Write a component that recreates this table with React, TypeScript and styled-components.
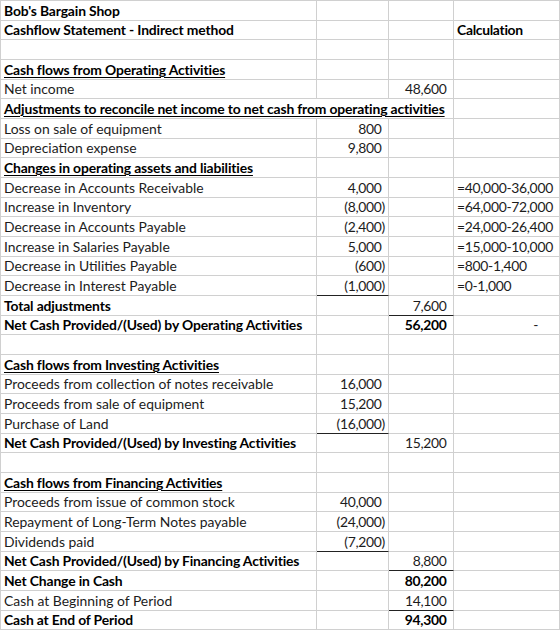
import React from "react"
import styled, { createGlobalStyle } from "styled-components"

const GRID = "#d0d0d0"
const RULE = "#222"
const PITCH = 19.67

const GlobalStyle = createGlobalStyle`
  html, body {
    margin: 0;
    padding: 0;
    background: #fff;
  }
`

type Kind = "plain" | "bold" | "head"

interface IRow {
  label?: string
  kind?: Kind
  span?: boolean
  b?: string
  c?: string
  cBold?: boolean
  d?: string
  dBold?: boolean
  dash?: boolean
  ruleB?: boolean
  ruleC?: boolean
}

const rows: IRow[] = [
  { label: "Bob's Bargain Shop", kind: "bold" },
  { label: "Cashflow Statement - Indirect method", kind: "bold", d: "Calculation", dBold: true },
  {},
  { label: "Cash flows from Operating Activities", kind: "head" },
  { label: "Net income", c: "48,600" },
  { label: "Adjustments to reconcile net income to net cash from operating activities", kind: "head", span: true },
  { label: "Loss on sale of equipment", b: "800" },
  { label: "Depreciation expense", b: "9,800" },
  { label: "Changes in operating assets and liabilities", kind: "head" },
  { label: "Decrease in Accounts Receivable", b: "4,000", d: "=40,000-36,000" },
  { label: "Increase in Inventory", b: "(8,000)", d: "=64,000-72,000" },
  { label: "Decrease in Accounts Payable", b: "(2,400)", d: "=24,000-26,400" },
  { label: "Increase in Salaries Payable", b: "5,000", d: "=15,000-10,000" },
  { label: "Decrease in Utilities Payable", b: "(600)", d: "=800-1,400" },
  { label: "Decrease in Interest Payable", b: "(1,000)", d: "=0-1,000", ruleB: true },
  { label: "Total adjustments", kind: "bold", c: "7,600", ruleC: true },
  { label: "Net Cash Provided/(Used) by Operating Activities", kind: "bold", c: "56,200", cBold: true, dash: true },
  {},
  { label: "Cash flows from Investing Activities", kind: "head" },
  { label: "Proceeds from collection of notes receivable", b: "16,000" },
  { label: "Proceeds from sale of equipment", b: "15,200" },
  { label: "Purchase of Land", b: "(16,000)", ruleB: true },
  { label: "Net Cash Provided/(Used) by Investing Activities", kind: "bold", c: "15,200" },
  {},
  { label: "Cash flows from Financing Activities", kind: "head" },
  { label: "Proceeds from issue of common stock", b: "40,000" },
  { label: "Repayment of Long-Term Notes payable", b: "(24,000)" },
  { label: "Dividends paid", b: "(7,200)", ruleB: true },
  { label: "Net Cash Provided/(Used) by Financing Activities", kind: "bold", c: "8,800", ruleC: true },
  { label: "Net Change in Cash", kind: "bold", c: "80,200", cBold: true },
  { label: "Cash at Beginning of Period", c: "14,100", ruleC: true },
  { label: "Cash at End of Period", kind: "bold", c: "94,300", cBold: true },
]

const Sheet = styled.div`
  display: flex;
  flex-direction: column;
  width: max-content;
  border-top: 1px solid ${GRID};
  border-left: 1px solid ${GRID};
  font-family: Lato, "Open Sans", "DejaVu Sans", sans-serif;
  font-size: 13.9px;
  color: #1c1c1c;
`

const Row = styled.div<{ $h: number }>`
  display: grid;
  grid-template-columns: 316px 72px 65px 106px;
  height: ${(p) => p.$h}px;
`

const Cell = styled.div<{ $align?: "left" | "right"; $bold?: boolean; $rule?: boolean; $span?: number; $padRight?: number; $num?: boolean }>`
  box-sizing: border-box;
  display: flex;
  align-items: flex-end;
  justify-content: ${(p) => (p.$align === "right" ? "flex-end" : "flex-start")};
  grid-column: span ${(p) => p.$span ?? 1};
  padding: 0 ${(p) => p.$padRight ?? 3}px 1px 3px;
  border-right: 1px solid ${GRID};
  border-bottom: 1px solid ${(p) => (p.$rule ? RULE : GRID)};
  font-weight: ${(p) => (p.$bold ? 700 : 400)};
  color: ${(p) => (p.$bold ? "#000" : "inherit")};
  letter-spacing: ${(p) => (p.$num ? "-0.3px" : "0")};
  line-height: 17px;
  white-space: nowrap;
  overflow: hidden;
`

const Label = styled.span<{ $kind: Kind }>`
  font-weight: ${(p) => (p.$kind === "plain" ? 400 : 700)};
  color: ${(p) => (p.$kind === "plain" ? "inherit" : "#000")};
  letter-spacing: ${(p) => (p.$kind === "plain" ? "0" : "-0.15px")};
  text-decoration: ${(p) => (p.$kind === "head" ? "underline" : "none")};
  text-decoration-thickness: 1px;
  text-underline-offset: 2px;
`

const Ghost = styled.span`
  visibility: hidden;
`

const Amount = ({ value }: { value?: string }) => {
  if (!value) return null
  const negative = value.startsWith("(")
  return (
    <span>
      {value}
      {!negative && <Ghost>)</Ghost>}
    </span>
  )
}

// Excel-like row pitch: round each edge so the grid lines stay crisp
const rowHeight = (i: number) => Math.round((i + 1) * PITCH) - Math.round(i * PITCH)

const App = () => {
  return (
    <>
      <GlobalStyle />
      <Sheet>
        {rows.map((r, i) => {
          const kind = r.kind ?? "plain"
          return (
            <Row key={i} $h={rowHeight(i)}>
              <Cell $span={r.span ? 3 : 1}>{r.label && <Label $kind={kind}>{r.label}</Label>}</Cell>
              {!r.span && (
                <>
                  <Cell $align="right" $rule={r.ruleB} $num>
                    <Amount value={r.b} />
                  </Cell>
                  <Cell $align="right" $rule={r.ruleC} $bold={r.cBold} $num>
                    <Amount value={r.c} />
                  </Cell>
                </>
              )}
              <Cell $align={r.dash ? "right" : "left"} $bold={r.dBold} $padRight={r.dash ? 21 : 3} $num>
                {r.dash ? "-" : r.d}
              </Cell>
            </Row>
          )
        })}
      </Sheet>
    </>
  )
}

export default App
